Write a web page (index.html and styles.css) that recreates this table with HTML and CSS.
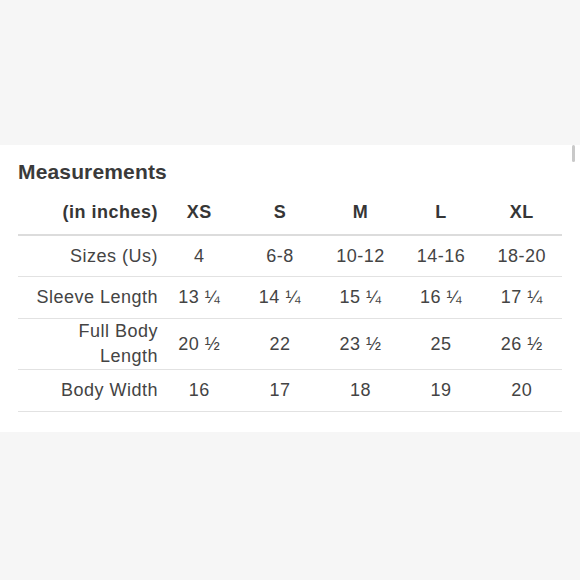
FILE: index.html
```html
<!DOCTYPE html>
<html>
<head>
<meta charset="utf-8">
<link rel="stylesheet" href="styles.css">
</head>
<body>
<div class="page">
  <section class="panel">
    <h2 class="title">Measurements</h2>
    <table class="chart">
      <colgroup>
        <col class="col-label">
        <col><col><col><col><col>
      </colgroup>
      <thead>
        <tr>
          <th class="label">(in inches)</th>
          <th>XS</th><th>S</th><th>M</th><th>L</th><th>XL</th>
        </tr>
      </thead>
      <tbody>
        <tr class="short">
          <td class="label">Sizes (Us)</td>
          <td>4</td><td>6-8</td><td>10-12</td><td>14-16</td><td>18-20</td>
        </tr>
        <tr>
          <td class="label">Sleeve Length</td>
          <td>13 ¼</td><td>14 ¼</td><td>15 ¼</td><td>16 ¼</td><td>17 ¼</td>
        </tr>
        <tr class="tall">
          <td class="label">Full Body<br>Length</td>
          <td>20 ½</td><td>22</td><td>23 ½</td><td>25</td><td>26 ½</td>
        </tr>
        <tr>
          <td class="label">Body Width</td>
          <td>16</td><td>17</td><td>18</td><td>19</td><td>20</td>
        </tr>
      </tbody>
    </table>
    <div class="scroll-thumb"></div>
  </section>
</div>
</body>
</html>
```
FILE: styles.css
```css
html, body {
  margin: 0;
  padding: 0;
}
body {
  background: #f6f6f6;
  font-family: "Liberation Sans", Arial, sans-serif;
  width: 580px;
  height: 580px;
  overflow: hidden;
}
.page {
  padding-top: 145px;
}
.panel {
  position: relative;
  background: #ffffff;
  height: 287px;
  box-sizing: border-box;
  padding: 14px 18px 0 18px;
}
.title {
  margin: 0;
  font-size: 21px;
  line-height: 26px;
  font-weight: bold;
  color: #3a3a3a;
  letter-spacing: 0.15px;
}
.chart {
  margin-top: 9px;
  width: 544px;
  table-layout: fixed;
  border-collapse: collapse;
  font-size: 18px;
  line-height: 25px;
  letter-spacing: 0.5px;
  color: #444444;
}
.col-label {
  width: 141px;
}
.chart th {
  font-weight: bold;
  color: #363636;
  height: 37px;
  padding: 0 0 3px 0;
  vertical-align: middle;
  text-align: center;
  border-bottom: 2px solid #dcdcdc;
}
.chart td {
  height: 41px;
  padding: 0;
  vertical-align: middle;
  text-align: center;
  border-bottom: 1px solid #e2e2e2;
}
.chart .short td {
  height: 40px;
}
.chart .tall td {
  height: 50px;
}
.chart .label {
  text-align: right;
  padding-right: 1px;
}
.scroll-thumb {
  position: absolute;
  top: 0;
  left: 572px;
  width: 3px;
  height: 17px;
  border-radius: 2px;
  background: #c9c9c9;
}
```
